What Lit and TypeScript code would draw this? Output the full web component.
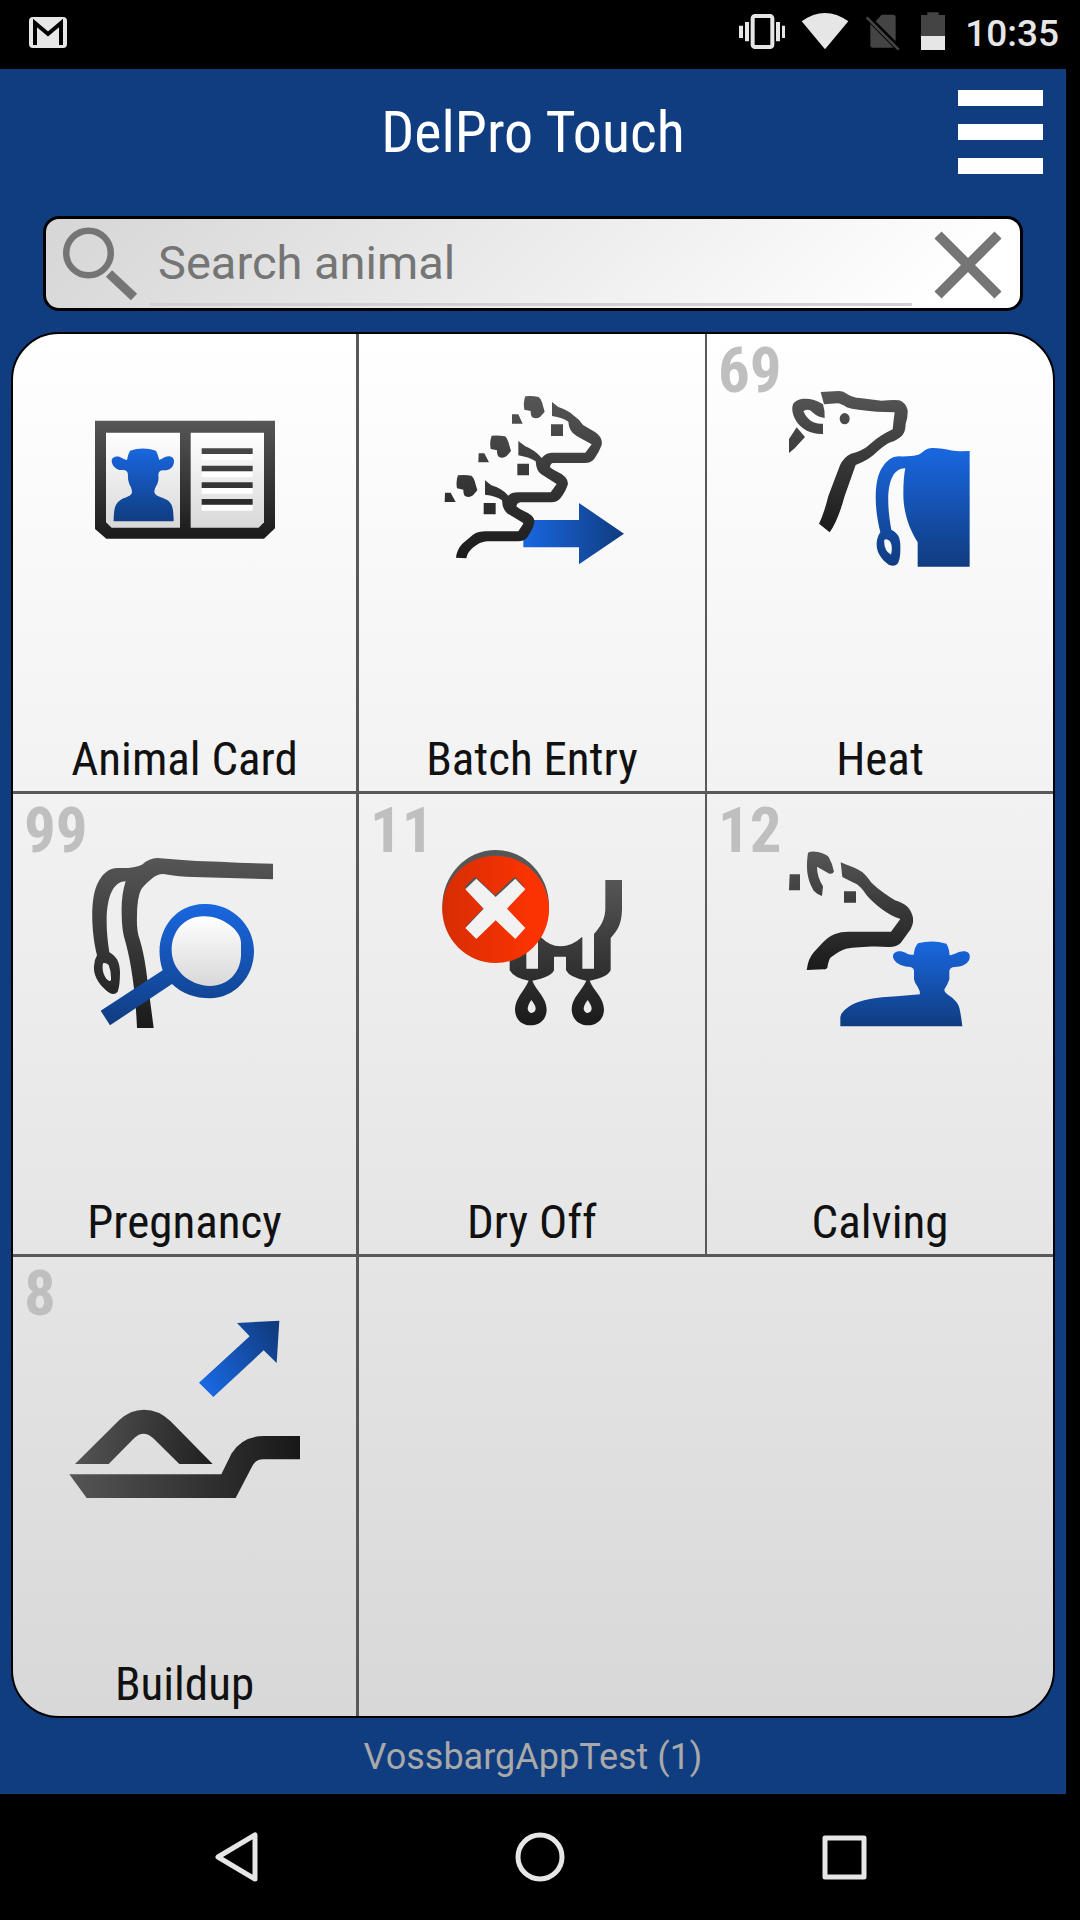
import { LitElement, html, svg, css, nothing, TemplateResult, SVGTemplateResult } from "lit";
import { customElement, property, state } from "lit/decorators.js";

interface Tile {
  label: string;
  count?: number;
  viewBox: string;
  art: SVGTemplateResult;
}

const shade = (id: string, x1: number, y1: number, x2: number, y2: number, from: string, to: string) => svg`
  <linearGradient id=${id} gradientUnits="userSpaceOnUse" x1=${x1} y1=${y1} x2=${x2} y2=${y2}>
    <stop offset="0" stop-color=${from}></stop>
    <stop offset="1" stop-color=${to}></stop>
  </linearGradient>`;

const DARK_TOP = "#565656";
const DARK_END = "#1a1a1a";
const BLUE_TOP = "#1967e0";
const BLUE_END = "#103c80";

const animalCard = svg`
  <defs>
    ${shade("frame", 0, 90, 0, 444, DARK_TOP, DARK_END)}
    ${shade("person", 0, 172, 0, 394, BLUE_TOP, BLUE_END)}
    ${shade("paper", 0, 126, 0, 411, "#ffffff", "#d8d8d8")}
  </defs>
  <path fill="url(#frame)" d="M105 90H645V413L612 444H139L105 415Z"/>
  <path fill="url(#paper)" d="M138 126H360V411H155L138 395Z"/>
  <path fill="url(#paper)" d="M392 126H612V395L596 411H392Z"/>
  <path fill="url(#person)" d="M210 180Q248 167 288 180Q294 192 298 208C307 205 314 198 325 197C338 197 343 205 342 214C340 232 326 240 312 239C302 238 296 242 295 252Q297 270 292 280C286 290 283 297 283 304C287 318 300 317 315 325C338 335 340 350 341 392H161C161 352 166 337 185 326C200 318 213 318 216 305C216 296 212 288 207 278Q203 268 204 252C203 241 197 237 186 238C168 239 155 224 155 210C156 199 168 196 178 198C188 201 192 207 201 208Q204 190 210 180Z"/>
  <g fill="#ffffff">
    <path d="M425 190H578V207H425ZM425 242H578V259H425ZM425 292H578V309H425ZM425 342H578V360H425Z"/>
  </g>
  <g fill="url(#frame)">
    <path d="M425 173H578V190H425ZM425 225H578V242H425ZM425 275H578V292H425ZM425 325H578V342H425Z"/>
  </g>`;

const batchEntry = svg`
  <defs>
    ${shade("herd", 0, 78, 0, 563, DARK_TOP, DARK_END)}
    ${shade("arrow", 307, 0, 608, 0, BLUE_TOP, BLUE_END)}
  </defs>
  <path fill="url(#arrow)" d="M307 449H474V398L609 490L474 582V531H307Z"/>
  <g fill="url(#herd)">
    <path d="M313 78Q335 76 353 80Q360 85 363 96L371 124L358 139Q346 148 334 141Q329 137 329 122L310 118Q306 96 313 78ZM273 132H292L305 160H273ZM390 162H426V197H390Z"/>
    <path d="M212 196Q234 194 252 198Q259 203 262 214L270 242L257 257Q245 266 233 259Q228 255 228 240L209 236Q205 214 212 196ZM173 249H190L204 276H172ZM289 280H324V315H289Z"/>
    <path d="M111 315Q133 313 151 316Q158 321 161 332L169 360L156 375Q144 384 132 377Q127 373 127 358L108 354Q104 332 111 315ZM72 367H89L104 395H71ZM188 398H224V432H188Z"/>
    <path d="M393 95L412 110Q442 120 456 134Q474 146 486 164L522 185Q546 201 542 224Q534 246 520 265Q509 278 492 278H395Q388 280 387 291Q397 299 409 304Q441 318 441 340Q436 360 418 384Q409 396 391 396H298Q288 398 286 408Q296 416 310 423Q343 436 340 458Q335 479 317 503Q308 513 292 513H197Q176 515 157 531Q139 546 136 564L105 562Q107 538 124 520L156 493Q172 483 194 483H292L308 459L260 430Q244 418 243 390Q225 376 192 373V330L211 345Q243 354 262 376Q272 366 291 366H389L407 341L361 312Q346 303 344 273Q327 261 292 255V212L313 228Q343 240 362 263Q373 248 392 247H493L512 222Q492 211 467 197Q443 183 442 154Q425 142 393 137Z"/>
  </g>`;

const heat = svg`
  <defs>
    ${shade("head", 0, 182, 0, 605, DARK_TOP, DARK_END)}
    ${shade("rump", 0, 354, 0, 708, BLUE_TOP, BLUE_END)}
  </defs>
  <g fill="url(#head)">
    <path d="M362 185L415 182Q430 181 440 190Q458 202 480 203L545 211Q580 208 598 210Q617 216 623 240Q624 260 617 280Q617 303 606 316Q589 331 573 335Q555 343 531 364Q511 386 467 404L434 497Q414 571 389 606L357 580Q372 550 385 497L420 405Q431 380 453 370C484 363 497 353 514 338Q537 317 578 297Q581 266 584 246L530 244Q467 240 440 231Q424 220 412 219L372 222Z"/>
    <path fill-rule="evenodd" d="M369 222C333 199 291 201 279 222C268 251 298 314 369 311V280Q346 282 330 270Q316 258 310 243Q326 232 340 248Q352 260 374 263Q375 240 369 222Z"/>
    <path d="M290 291L315 320L284 354L267 368V326Z"/>
    <ellipse cx="434" cy="265" rx="15" ry="17"/>
  </g>
  <path fill="url(#rump)" fill-rule="evenodd" d="M809 362V709H653V636C630 600 610 550 610 490Q610 440 616 414C568 413 553 486 574 598C594 608 602 622 601 651Q602 688 592 701Q583 710 566 703C539 684 524 657 532 625Q535 613 541 606C520 523 524 448 545 414Q566 378 596 378Q634 379 655 373C671 366 675 353 697 353C727 352 754 362 779 363ZM553 628Q550 660 573 673Q579 650 571 634Q563 623 553 628Z"/>`;

const pregnancy = svg`
  <defs>
    ${shade("legs", 0, 236, 0, 745, DARK_TOP, DARK_END)}
    ${shade("glass", 0, 374, 0, 738, BLUE_TOP, BLUE_END)}
    ${shade("lens", 0, 410, 0, 620, "#ffffff", "#d8d8d8")}
  </defs>
  <path fill="url(#legs)" fill-rule="evenodd" d="M819 253V300L580 293Q540 293 490 284Q470 284 455 298Q430 319 423 331Q411 355 411 410Q409 455 419 480Q431 520 438 570L461 746H411C407 650 396 560 377 490Q365 455 365 405Q363 350 377 306C323 307 309 400 328 519C348 530 360 547 360 579Q360 618 353 637Q344 648 329 641C302 622 279 592 282 560Q283 541 291 528C274 462 270 363 291 316Q314 265 355 266Q400 268 426 256Q448 236 472 236C510 238 546 243 590 245L660 247Q740 252 819 253ZM309 552Q304 578 319 598Q331 611 333 601Q334 576 326 557Q317 549 309 552Z"/>
  <path fill="url(#glass)" d="M302 694L488 573C456 480 508 376 612 374C695 371 763 438 762 516C762 595 702 657 630 657C586 657 545 642 516 614L330 738Z"/>
  <path fill="url(#lens)" d="M610 411C667 410 723 452 723 490V530C720 580 685 619 630 620C564 617 515 570 515 512C515 458 551 411 610 411Z"/>`;

const dryOff = svg`
  <defs>
    ${shade("udder", 0, 302, 0, 738, DARK_TOP, DARK_END)}
    ${shade("stop", 273, 0, 540, 0, "#d62d04", "#fb3301")}
  </defs>
  <path fill="url(#udder)" fill-rule="evenodd" d="M763 302H813V390C812 430 803 451 779 476V573Q768 595 716 604C728 635 759 655 759 691C758 720 738 738 711 738C682 738 662 717 662 690C662 655 693 634 706 604Q656 595 645 573V532H609V573Q600 594 544 604C556 635 587 655 587 691C586 721 566 738 539 738C509 738 492 717 492 690C492 657 520 635 533 604Q490 597 476 573V470H566Q596 501 628 501Q662 501 694 472V568H729V464C754 435 764 415 763 379ZM526 500V568H561V482ZM541 662Q530 678 530 688Q532 700 542 701Q554 699 554 687Q553 677 541 662ZM710 662Q698 678 698 688Q700 700 710 701Q722 699 722 687Q721 677 710 662Z"/>
  <ellipse cx="434" cy="380" rx="160" ry="168" fill="#555756"/>
  <ellipse cx="434" cy="390" rx="160" ry="161" fill="url(#stop)"/>
  <path fill="#555756" d="M341 322L373 292L432 348L491 292L516 318L460 380L405 400L341 444L396 388Z"/>
  <path fill="#f2f2f2" d="M376 298L434 353L493 298L523 330L468 388L523 446L493 479L434 423L376 479L343 446L398 388L343 330Z"/>`;

const calving = svg`
  <defs>
    ${shade("cow", 0, 215, 0, 572, DARK_TOP, DARK_END)}
    ${shade("calf", 0, 486, 0, 741, BLUE_TOP, BLUE_END)}
  </defs>
  <g fill="url(#cow)">
    <path d="M324 220Q335 214 354 218Q378 224 386 233Q397 252 402 277Q398 285 388 283L351 262Q351 292 369 321L366 350Q350 344 341 334C319 297 318 260 324 220ZM269 285H300V333H267ZM432 336H468V370H432Z"/>
    <path d="M422 249L442 257Q480 270 493 284Q506 297 513 309C536 332 564 350 585 363C617 372 631 388 637 408Q644 426 632 450L602 491Q589 504 565 503C520 499 470 503 438 508Q420 513 391 535Q385 545 382 565Q378 571 370 570L320 572Q325 536 342 518L367 491C390 466 415 457 445 457H573L601 419C563 407 526 377 500 348C487 329 477 316 458 309L427 293Z"/>
  </g>
  <path fill="url(#calf)" d="M654 492Q697 481 739 493Q747 505 749 528C766 525 777 514 795 516C810 518 812 531 807 543C799 557 784 562 764 563Q751 563 748 574V600Q743 616 735 627Q729 637 742 645C762 658 777 672 780 694Q784 715 787 741H421V714Q422 703 431 695C469 658 532 655 590 651L660 645Q660 633 653 622Q643 609 642 600V573Q639 562 625 562C604 561 582 550 579 533C578 518 594 514 608 517C620 520 626 528 641 526Q644 502 654 492Z"/>`;

const buildup = svg`
  <defs>
    ${shade("hump", 225, 600, 638, 680, "#555555", "#1f1f1f")}
    ${shade("ground", 208, 0, 900, 0, "#555555", "#181818")}
    ${shade("rise", 618, 440, 850, 300, BLUE_TOP, BLUE_END)}
  </defs>
  <path fill="url(#rise)" d="M597 425L749 286L711 246L838 239L830 366L791 328L640 468Z"/>
  <path fill="url(#hump)" d="M225 669L358 537Q391 506 432 506Q476 506 511 540L638 669H538L459 591Q430 565 403 591L326 669Z"/>
  <path fill="url(#ground)" d="M208 700H664L695 637Q727 585 792 585H900V655H790Q767 655 757 675L707 771H260Z"/>`;

const TILES: Tile[] = [
  { label: "Animal Card", viewBox: "15 -20 720 570", art: animalCard },
  { label: "Batch Entry", viewBox: "-27 41 720 570", art: batchEntry },
  { label: "Heat", count: 69, viewBox: "180 161 720 570", art: heat },
  { label: "Pregnancy", count: 99, viewBox: "195 194 720 570", art: pregnancy },
  { label: "Dry Off", count: 11, viewBox: "183 194 720 570", art: dryOff },
  { label: "Calving", count: 12, viewBox: "180 194 720 570", art: calving },
  { label: "Buildup", count: 8, viewBox: "195 198 720 570", art: buildup },
];

@customElement("status-bar")
class StatusBar extends LitElement {
  static styles = css`
    :host {
      display: flex;
      align-items: center;
      gap: 16px;
      height: 69px;
      padding: 0 21px 2px 28px;
      box-sizing: border-box;
      background: #000;
      color: #e6e6e6;
      font: 500 37px/42px Roboto, sans-serif;
    }
    svg { display: block; flex: none; height: 40px; margin-bottom: 4px; }
    .mail { width: 40px; margin-right: auto; }
    .wide { width: 48px; }
    .sim { width: 36px; }
    .battery { width: 32px; }
  `;

  render() {
    return html`
      <svg class="mail" viewBox="0 0 40 40" aria-hidden="true">
        <rect x="1" y="5" width="38" height="31" rx="4" fill="#e6e6e6"/>
        <path d="M7 33V11L20 22L33 11V33" fill="none" stroke="#000" stroke-width="4"/>
      </svg>
      <svg class="wide" viewBox="114 36 144 120" aria-hidden="true">
        <rect x="161" y="48" width="59" height="93" rx="7" fill="none" stroke="#e6e6e6" stroke-width="12"/>
        <path fill="#e6e6e6" d="M120 77H132V114H120ZM138 66H150V124H138ZM231 66H243V124H231ZM249 77H261V114H249Z"/>
      </svg>
      <svg class="wide" viewBox="303 36 144 120" aria-hidden="true">
        <path fill="#e6e6e6" d="M305 64Q375 14 445 64L375 148Z"/>
      </svg>
      <svg class="sim" viewBox="492 36 108 120" aria-hidden="true">
        <path fill="#444" d="M542 44H576Q584 44 584 52V124L524 64ZM508 72L578 143H516Q508 143 508 135Z"/>
        <path stroke="#444" stroke-width="8" d="M497 52L593 149"/>
      </svg>
      <svg class="battery" viewBox="654 36 96 120" aria-hidden="true">
        <path fill="#444" d="M685 37H719V45H738V108H666V45H685Z"/>
        <path fill="#e6e6e6" d="M666 108H738V150H666Z"/>
      </svg>
      <time>10:35</time>
    `;
  }
}

@customElement("search-field")
class SearchField extends LitElement {
  @state() private query = "";

  static styles = css`
    :host {
      display: flex;
      align-items: center;
      box-sizing: border-box;
      height: 95px;
      padding: 0 14px 0 16px;
      border: 3px solid #000;
      border-radius: 16px;
      background: linear-gradient(135deg, #d6d6d6, #fff 92%);
    }
    svg { display: block; width: 76px; height: 76px; flex: none; }
    label { margin-right: 12px; }
    input {
      flex: 1;
      min-width: 0;
      box-sizing: border-box;
      height: 84px;
      padding: 0 8px;
      border: 0;
      border-bottom: 3px solid #d2d0d3;
      outline: 0;
      background: none;
      color: #333;
      font: 47px/56px Roboto, sans-serif;
    }
    input::placeholder { color: #757575; opacity: 1; }
    button {
      margin-left: 18px;
      padding: 0;
      border: 0;
      background: none;
      cursor: pointer;
    }
  `;

  private onInput(e: Event) {
    this.query = (e.target as HTMLInputElement).value;
  }

  render() {
    return html`
      <label for="animal" aria-label="Search animal">
        <svg viewBox="0 0 76 76" fill="none" stroke="#757575">
          <circle cx="26.5" cy="27" r="22.3" stroke-width="6.5"/>
          <path d="M47 47.5L72 71" stroke-width="9"/>
        </svg>
      </label>
      <input id="animal" type="text" placeholder="Search animal" .value=${this.query} @input=${this.onInput}>
      <button type="button" aria-label="Clear" @click=${() => (this.query = "")}>
        <svg viewBox="0 0 76 76" fill="none" stroke="#757575" stroke-width="10">
          <path d="M8 9L68 69M68 9L8 69"/>
        </svg>
      </button>
    `;
  }
}

@customElement("menu-tile")
class MenuTile extends LitElement {
  @property({ attribute: false }) tile!: Tile;

  static styles = css`
    :host { display: grid; }
    button {
      position: relative;
      display: flex;
      flex-direction: column;
      align-items: center;
      justify-content: space-between;
      padding: 50px 0 4px;
      border: 0;
      background: none;
      color: #111;
      font: 47px/56px "Roboto Condensed", "Liberation Sans Narrow", Roboto, sans-serif;
      cursor: pointer;
    }
    svg { display: block; width: 240px; height: 190px; overflow: visible; }
    .count {
      position: absolute;
      top: 0;
      left: 11px;
      color: #bfbfbf;
      font-size: 63px;
      font-weight: 700;
      line-height: 74px;
    }
  `;

  render(): TemplateResult {
    const { label, count, viewBox, art } = this.tile;
    return html`
      <button type="button">
        ${count === undefined ? nothing : html`<span class="count">${count}</span>`}
        <svg viewBox=${viewBox} aria-hidden="true">${art}</svg>
        <span>${label}</span>
      </button>
    `;
  }
}

@customElement("nav-bar")
class NavBar extends LitElement {
  static styles = css`
    :host {
      display: flex;
      height: 126px;
      padding: 0 84px;
      background: #000;
    }
    button {
      display: grid;
      flex: 1;
      place-items: center;
      padding: 0;
      border: 0;
      background: none;
      cursor: pointer;
    }
    svg { display: block; width: 52px; height: 52px; }
  `;

  render() {
    return html`
      <button type="button" aria-label="Back">
        <svg viewBox="0 0 52 52" fill="none" stroke="#e6e6e6" stroke-width="5" stroke-linejoin="round">
          <path d="M45 4V48L8 26Z"/>
        </svg>
      </button>
      <button type="button" aria-label="Home">
        <svg viewBox="0 0 52 52" fill="none" stroke="#e6e6e6" stroke-width="5">
          <circle cx="26" cy="26" r="22"/>
        </svg>
      </button>
      <button type="button" aria-label="Recent apps">
        <svg viewBox="0 0 52 52" fill="none" stroke="#e6e6e6" stroke-width="5" stroke-linejoin="round">
          <rect x="7" y="7" width="39" height="39"/>
        </svg>
      </button>
    `;
  }
}

@customElement("app-root")
class AppRoot extends LitElement {
  static styles = css`
    :host {
      display: flex;
      flex-direction: column;
      min-height: 100vh;
      background: #000;
    }
    .app {
      display: flex;
      flex: 1;
      flex-direction: column;
      margin-right: 14px;
      background: #103c80;
    }
    header {
      display: grid;
      grid-template-columns: 1fr auto 1fr;
      align-items: center;
      padding: 21px 23px 42px;
    }
    h1 {
      grid-column: 2;
      margin: 0;
      color: #fff;
      font: 400 58px/68px "Roboto Condensed", "Liberation Sans Narrow", Roboto, sans-serif;
    }
    .menu {
      display: flex;
      flex-direction: column;
      justify-self: end;
      gap: 18px;
      width: 85px;
      padding: 0;
      border: 0;
      background: none;
      cursor: pointer;
    }
    .bar { height: 16px; background: #fff; }
    search-field { margin: 0 43px 21px; }
    main {
      display: grid;
      flex: 1;
      grid-template-columns: 346fr 348fr 346fr;
      grid-template-rows: 460fr 462fr 459fr;
      margin: 0 11px;
      overflow: hidden;
      border: 2px solid #000;
      border-radius: 48px;
      background: linear-gradient(#fff, #d8d8d8);
    }
    .cell { border: 0 solid #585a59; }
    .cell:nth-child(3n + 1) { border-right-width: 3px; }
    .cell:nth-child(3n + 2) { border-right-width: 2px; }
    .cell:nth-child(-n + 6) { border-bottom-width: 3px; }
    footer {
      padding: 18px 0 16px;
      color: #a9a9a9;
      font: 36px/42px Roboto, sans-serif;
      text-align: center;
    }
  `;

  render() {
    return html`
      <status-bar></status-bar>
      <div class="app">
        <header>
          <h1>DelPro Touch</h1>
          <button class="menu" type="button" aria-label="Menu">
            <span class="bar"></span><span class="bar"></span><span class="bar"></span>
          </button>
        </header>
        <search-field></search-field>
        <main>
          ${TILES.map((tile) => html`<menu-tile class="cell" .tile=${tile}></menu-tile>`)}
        </main>
        <footer>VossbargAppTest (1)</footer>
      </div>
      <nav-bar></nav-bar>
    `;
  }
}
